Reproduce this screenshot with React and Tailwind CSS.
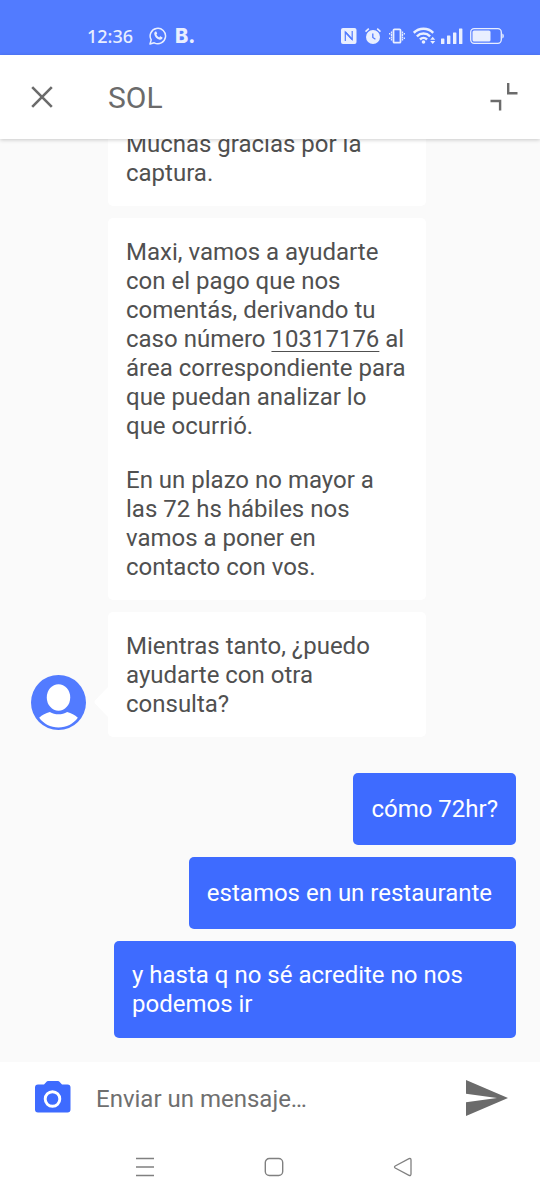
import React, { useState } from 'react';

const mensajesBot = [
    {
        id: 1,
        parrafos: ['Muchas gracias por la captura.'],
    },
    {
        id: 2,
        parrafos: [
            <>
                Maxi, vamos a ayudarte con el pago que nos comentás, derivando tu caso número{' '}
                <a href="#caso" className="underline decoration-1 underline-offset-4">10317176</a> al área
                correspondiente para que puedan analizar lo que ocurrió.
            </>,
            'En un plazo no mayor a las 72 hs hábiles nos vamos a poner en contacto con vos.',
        ],
    },
    {
        id: 3,
        parrafos: ['Mientras tanto, ¿puedo ayudarte con otra consulta?'],
    },
];

const mensajesUsuario = [
    { id: 4, texto: 'cómo 72hr?' },
    { id: 5, texto: 'estamos en un restaurante ' },
    { id: 6, texto: 'y hasta q no sé acredite no nos podemos ir' },
];

const BarraEstado = () => (
    <div className="flex h-[55px] shrink-0 items-center justify-between bg-[#527bff] pt-4 pr-9 pl-[87px] text-[#e9efff]">
        <div className="flex items-center">
            <span className="w-[62px] font-['Noto_Sans'] text-[18px] leading-6 font-medium">12:36</span>
            <svg className="h-[18px] w-[18px]" viewBox="0 0 18 18" fill="none" stroke="currentColor">
                <path strokeWidth="1.5" strokeLinejoin="round" d="M1 17l1.2-4.1A7.7 7.7 0 1 1 5.2 15.8z" />
                <path
                    fill="currentColor"
                    stroke="none"
                    d="M6.3 4.6c.4-.3.9-.2 1.1.2l.7 1.5c.1.3 0 .6-.2.8l-.5.6c.6 1.2 1.5 2.1 2.8 2.7l.7-.8c.2-.2.5-.3.8-.2l1.5.8c.3.2.4.5.3.8-.3 1.3-1.5 1.9-2.7 1.7-2.9-.5-5.1-2.8-5.5-5.4-.2-1.1.2-2.1 1-2.7z"
                />
            </svg>
            <span className="ml-2 font-['Inter'] text-[20px] leading-6 font-extrabold">B.</span>
        </div>
        <div className="flex items-center">
            {/* nfc */}
            <svg className="h-4 w-4" viewBox="0 0 16 16">
                <rect width="15.5" height="16" rx="2" fill="currentColor" />
                <path d="M4.3 13V4l6.900 7.500V3" fill="none" stroke="#527bff" strokeWidth="1.2" />
                <path d="M4.300 4l6.900 7.500" stroke="#527bff" strokeWidth="1.6" />
            </svg>
            {/* alarma */}
            <svg className="ml-2 h-4 w-4" viewBox="0 0 16 16">
                <circle cx="8" cy="9" r="7" fill="currentColor" />
                <path d="M.5 3.6L3.8.6M15.5 3.6L12.2.6" stroke="currentColor" strokeWidth="1.6" />
                <path d="M7.8 5.5v4l2.600 1.700" fill="none" stroke="#527bff" strokeWidth="1.3" />
            </svg>
            {/* vibracion */}
            <svg className="ml-2 h-4 w-4" viewBox="0 0 16 16" fill="none" stroke="currentColor">
                <rect x="4.5" y="1.3" width="7" height="13.4" rx="1" strokeWidth="1.8" />
                <path d="M2.500 3.500v9M13.500 3.500v9M.6 5v1.500M.6 9.500v1.500M15.400 5v1.500M15.400 9.500v1.500" strokeWidth="1.3" strokeDasharray="2 .5" />
            </svg>
            {/* wifi */}
            <svg className="ml-2 h-[17px] w-[23px]" viewBox="0 0 23 17" fill="none" stroke="currentColor">
                <path strokeWidth="2.5" d="M.8 5.8a13.8 13.8 0 0 1 19.4 0M3.9 9.3a9.4 9.4 0 0 1 13.2 0M7 12.5a5 5 0 0 1 7 0" />
                <circle cx="10.5" cy="15" r="1.8" fill="currentColor" stroke="none" />
                <path fill="currentColor" stroke="none" d="M17.2 12.7l2.500-3 2.500 3zM17.2 13.900l2.500 3 2.500-3z" />
            </svg>
            {/* señal */}
            <svg className="ml-[5px] h-4 w-[22px]" viewBox="0 0 22 16" fill="currentColor">
                <rect x="0" y="10.500" width="3.400" height="5.500" rx=".5" />
                <rect x="6" y="7.500" width="3.400" height="8.500" rx=".5" />
                <rect x="12" y="4.500" width="3.400" height="11.500" rx=".5" />
                <rect x="18" y="0.500" width="3.400" height="15.500" rx=".5" />
            </svg>
            {/* bateria */}
            <svg className="ml-[7px] h-4 w-[34px]" viewBox="0 0 34 16">
                <rect x=".7" y=".7" width="30.6" height="14.6" rx="3.5" fill="none" stroke="currentColor" strokeWidth="1.3" />
                <rect x="2.5" y="2.600" width="18" height="10.800" rx="1.500" fill="currentColor" />
                <path d="M32.300 5.500c1.200.4 1.500 1.300 1.500 2.500s-.3 2.100-1.500 2.500z" fill="currentColor" />
            </svg>
        </div>
    </div>
);

const Encabezado = () => (
    <header className="relative z-10 flex h-[84px] shrink-0 items-center bg-white pr-[22px] pl-[30px] text-[#6b6b6b] shadow-[0_1px_4px_rgba(0,0,0,0.2)]">
        <button type="button" aria-label="Cerrar" className="h-6 w-6">
            <svg className="h-6 w-6" viewBox="0 0 24 24" stroke="currentColor" strokeWidth="2.6">
                <path d="M2.2 2.2l19.6 19.6M21.8 2.2L2.2 21.8" />
            </svg>
        </button>
        <h1 className="ml-[54px] pt-[2px] text-[30px] leading-9">SOL</h1>
        <button type="button" aria-label="Minimizar" className="ml-auto h-7 w-7">
            <svg className="h-7 w-7" viewBox="0 0 28 28" fill="none" stroke="currentColor" strokeWidth="2.4">
                <path d="M18.2 0v10.2H27.5M.5 18h9.6v9.5" />
            </svg>
        </button>
    </header>
);

const Avatar = () => (
    <svg className="mb-[7px] h-[55px] w-[55px] shrink-0" viewBox="0 0 54 54">
        <circle cx="27" cy="27" r="27" fill="#527bff" />
        <ellipse cx="27" cy="22" rx="11.5" ry="13" fill="#fff" />
        <path d="M8 42c3-3 6.5-4.5 10.5-5.6 5 3 12 3 17 0 4 1.1 7.5 2.6 10.5 5.6-4.5 6-11 9.5-19 9.5S12.5 48 8 42z" fill="#fff" />
    </svg>
);

const BurbujaBot = ({ mensaje, conAvatar }) => (
    <div className={conAvatar ? 'flex items-end pl-[31px]' : 'flex items-end pl-[108px]'}>
        {conAvatar && (
            <>
                <Avatar />
                <svg className="mb-5 ml-2 h-[30px] w-[14px] shrink-0" viewBox="0 0 14 30" fill="#fff">
                    <path d="M14 0v30L1 16.5Q0 15 1 13.5z" />
                </svg>
            </>
        )}
        <div className="w-full max-w-[318px] space-y-[25px] rounded-[5px] bg-white px-[18px] pt-5 pb-[18px] text-[#505050]">
            {mensaje.parrafos.map((parrafo, i) => (
                <p key={i}>{parrafo}</p>
            ))}
        </div>
    </div>
);

const BurbujaUsuario = ({ texto }) => (
    <div className="flex min-h-[72px] max-w-[402px] items-center rounded-[5px] bg-[#3e6bff] px-[18px] pt-5 pb-[19px] text-white">
        <p className="whitespace-break-spaces">{texto}</p>
    </div>
);

const BarraMensaje = () => {
    const [texto, setTexto] = useState('');

    return (
        <form
            className="flex h-[73px] shrink-0 items-center bg-white pr-8 pb-[2px] pl-[35px]"
            onSubmit={(e) => {
                e.preventDefault();
                setTexto('');
            }}
        >
            <button type="button" aria-label="Enviar foto" className="shrink-0">
                <svg className="mb-[2px] h-8 w-9" viewBox="0 0 36 32">
                    <path
                        d="M13.5 0h9c1 0 1.5.3 2.2 1L27 3.5h5.5A3 3 0 0 1 35.5 6.5v22a3 3 0 0 1-3 3h-29.5a3 3 0 0 1-3-3v-22a3 3 0 0 1 3-3H9L11.3 1c.7-.7 1.2-1 2.2-1z"
                        fill="#3e6bff"
                    />
                    <circle cx="17.5" cy="18" r="7.3" fill="none" stroke="#fff" strokeWidth="2.9" />
                </svg>
            </button>
            <input
                type="text"
                aria-label="Enviar un mensaje"
                placeholder="Enviar un mensaje…"
                value={texto}
                onChange={(e) => setTexto(e.target.value)}
                className="ml-[25px] min-w-0 flex-1 bg-transparent pt-1 text-[#505050] outline-none placeholder:text-[#6f6f6f]"
            />
            <button type="submit" aria-label="Enviar" className="shrink-0">
                <svg className="h-9 w-[42px]" viewBox="0 0 42 36" fill="#6b6b6b">
                    <path d="M0 0l42 18L0 36V22.3L31 18 0 13.7z" />
                </svg>
            </button>
        </form>
    );
};

const BarraNavegacion = () => (
    <nav className="flex h-[65px] shrink-0 items-center justify-center gap-[109px] bg-white pb-[2px] pl-2 text-[#808080]">
        <button type="button" aria-label="Recientes">
            <svg className="h-5 w-5" viewBox="0 0 20 20" stroke="currentColor" strokeWidth="1.5">
                <path d="M1 1.5h18M1 10h18M1 18.5h18" />
            </svg>
        </button>
        <button type="button" aria-label="Inicio">
            <svg className="h-5 w-5" viewBox="0 0 20 20" fill="none" stroke="currentColor" strokeWidth="1.4">
                <rect x="1.3" y="1.5" width="17.4" height="17" rx="4" />
            </svg>
        </button>
        <button type="button" aria-label="Atrás">
            <svg className="h-5 w-5" viewBox="0 0 20 20" fill="none" stroke="currentColor" strokeWidth="1.3">
                <path d="M2.2 9L16 1.7q2-.7 2 1.2v14.2q0 1.9-2 1.2L2.2 11q-1.4-1 0-2z" />
            </svg>
        </button>
    </nav>
);

const App = () => {
    return (
        <div className="flex h-screen flex-col overflow-hidden bg-[#fafafa] font-['Roboto',sans-serif] text-[24px] leading-[29px]">
            <BarraEstado />
            <Encabezado />
            <main className="flex min-h-0 flex-1 flex-col justify-end overflow-hidden pb-6">
                <div className="flex flex-col gap-3">
                    {mensajesBot.map((mensaje, i) => (
                        <BurbujaBot
                            key={mensaje.id}
                            mensaje={mensaje}
                            conAvatar={i === mensajesBot.length - 1}
                        />
                    ))}
                </div>
                <div className="mt-9 flex flex-col items-end gap-3 pr-6">
                    {mensajesUsuario.map((mensaje) => (
                        <BurbujaUsuario key={mensaje.id} texto={mensaje.texto} />
                    ))}
                </div>
            </main>
            <BarraMensaje />
            <BarraNavegacion />
        </div>
    );
};

export default App;
